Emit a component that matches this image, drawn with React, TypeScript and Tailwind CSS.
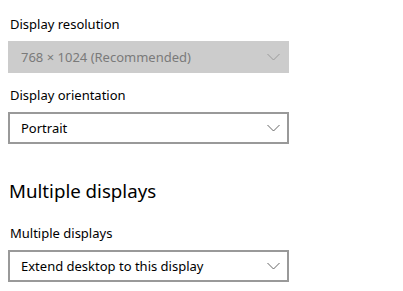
import React from "react";

function Chevron({ color }: { color: string }) {
  return (
    <svg width="13" height="8" viewBox="0 0 13 8" className="shrink-0">
      <path d="M0.5 1 L6.5 7 L12.5 1" fill="none" stroke={color} strokeWidth="1" />
    </svg>
  );
}

function Select({ label, disabled }: { label: string; disabled?: boolean }) {
  return (
    <div
      className={
        disabled
          ? "w-[281px] h-[32px] bg-[#cccccc] flex items-center justify-between pl-[13px] pr-[9px]"
          : "w-[281px] h-[32px] bg-white border-2 border-[#999999] flex items-center justify-between pl-[11px] pr-[7px]"
      }
    >
      <span
        className={
          disabled ? "text-[13px] leading-[20px] text-[#7a7a7a]" : "text-[13px] leading-[20px] text-black"
        }
      >
        {label}
      </span>
      <Chevron color={disabled ? "#9a9a9a" : "#666666"} />
    </div>
  );
}

export default function App() {
  return (
    <div
      className="w-[403px] h-[291px] bg-white pl-[8px] pt-[14px] overflow-hidden"
      style={{ fontFamily: '"Noto Sans", "Open Sans", sans-serif' }}
    >
      <div className="pl-[2px] text-[13px] leading-[20px] text-black">Display resolution</div>
      <div className="mt-[7px]">
        <Select label="768 × 1024 (Recommended)" disabled />
      </div>
      <div className="mt-[12px] pl-[2px] text-[13px] leading-[20px] text-black">Display orientation</div>
      <div className="mt-[7px]">
        <Select label="Portrait" />
      </div>
      <div className="mt-[33px] pl-[1px] text-[18.7px] leading-[28px] text-black">Multiple displays</div>
      <div className="mt-[18px] pl-[2px] text-[13px] leading-[20px] text-black">Multiple displays</div>
      <div className="mt-[7px]">
        <Select label="Extend desktop to this display" />
      </div>
    </div>
  );
}
